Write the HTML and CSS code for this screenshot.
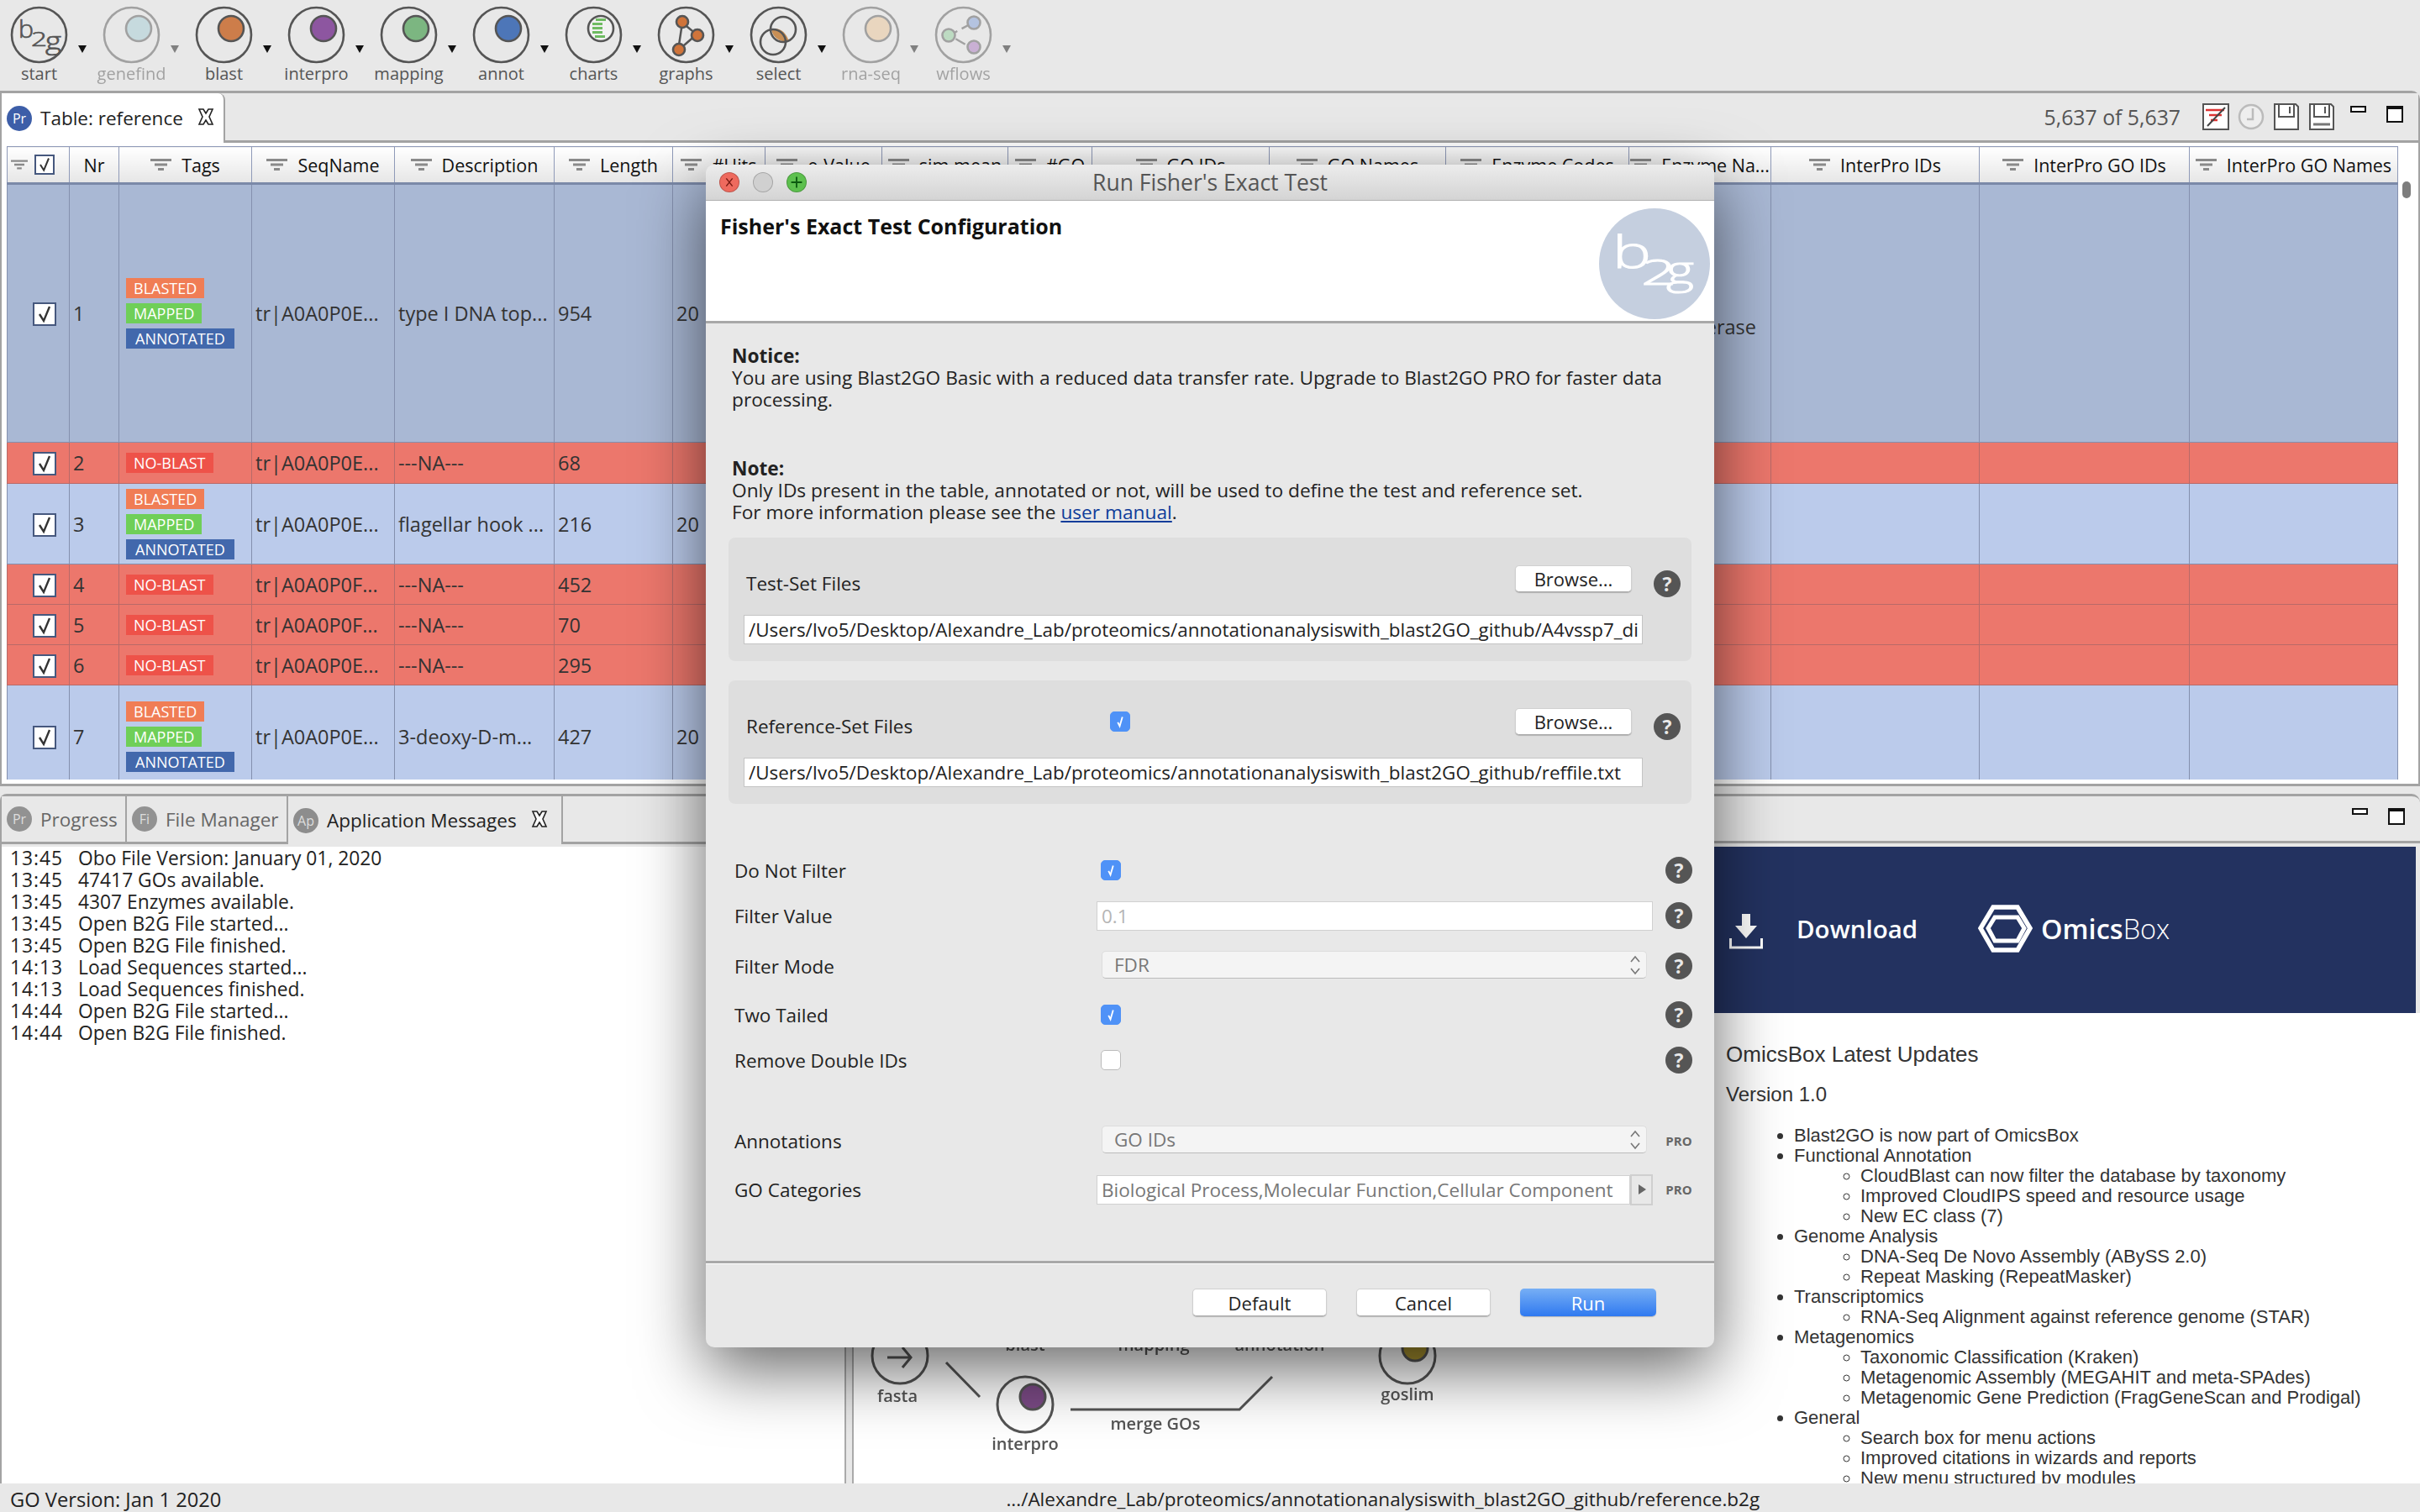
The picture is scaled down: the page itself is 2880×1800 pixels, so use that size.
FILE: index.html
```html
<!DOCTYPE html>
<html lang="en">
<head>
    <meta charset="UTF-8">
    <title>Blast2GO - Run Fisher's Exact Test</title>
    <link rel="stylesheet" href="styles.css">
</head>
<body>
    <!-- shared icons -->
    <svg class="defs" width="0" height="0">
        <symbol id="filter" viewBox="0 0 25 14"><path d="M0 0h25v3H0zM5 5.5h15v3H5zM9 11h7v3H9z" fill="#8a8a8a"/></symbol>
        <symbol id="check" viewBox="0 0 24 24"><path d="M6 12l5 8 7-17" fill="none" stroke="#333" stroke-width="2.4"/></symbol>
        <symbol id="tick" viewBox="0 0 24 24"><path d="M9 13l2.5 5L15 6" fill="none" stroke="#fff" stroke-width="2"/></symbol>
        <symbol id="close" viewBox="0 0 20 20"><path d="M2 1h5l3 5 3-5h5l-4 9 4 9h-5l-3-5-3 5H2l4-9z" fill="#fff" stroke="#222" stroke-width="1.6"/></symbol>
        <symbol id="updown" viewBox="0 0 12 24"><path d="M1 8l5-6 5 6M1 16l5 6 5-6" fill="none" stroke="#777" stroke-width="1.6"/></symbol>
    </svg>

    <!-- barra de herramientas -->
    <header class="toolbar">
        <div class="tool">
            <div class="tool-btn">
                <svg class="tool-icon" viewBox="0 0 69 69">
                    <circle class="ring" cx="34.5" cy="34.5" r="32.5"/>
                    <text class="logo-b" x="10" y="38" textLength="18" lengthAdjust="spacingAndGlyphs">b</text>
                    <text class="logo-2" x="25" y="48" textLength="19" lengthAdjust="spacingAndGlyphs">2</text>
                    <text class="logo-g" x="42" y="52" textLength="19" lengthAdjust="spacingAndGlyphs">g</text>
                </svg>
                <span>start</span>
            </div>
            <i class="arrow"></i>
        </div>
        <div class="tool off">
            <div class="tool-btn">
                <svg class="tool-icon" viewBox="0 0 69 69"><circle class="ring" cx="34.5" cy="34.5" r="32.5"/><circle class="disc" cx="43" cy="27" r="15" fill="#a3cbd4"/></svg>
                <span>genefind</span>
            </div>
            <i class="arrow"></i>
        </div>
        <div class="tool">
            <div class="tool-btn">
                <svg class="tool-icon" viewBox="0 0 69 69"><circle class="ring" cx="34.5" cy="34.5" r="32.5"/><circle class="disc" cx="43" cy="27" r="15" fill="#cd7d4a"/></svg>
                <span>blast</span>
            </div>
            <i class="arrow"></i>
        </div>
        <div class="tool">
            <div class="tool-btn">
                <svg class="tool-icon" viewBox="0 0 69 69"><circle class="ring" cx="34.5" cy="34.5" r="32.5"/><circle class="disc" cx="43" cy="27" r="15" fill="#8d56a0"/></svg>
                <span>interpro</span>
            </div>
            <i class="arrow"></i>
        </div>
        <div class="tool">
            <div class="tool-btn">
                <svg class="tool-icon" viewBox="0 0 69 69"><circle class="ring" cx="34.5" cy="34.5" r="32.5"/><circle class="disc" cx="43" cy="27" r="15" fill="#7cb681"/></svg>
                <span>mapping</span>
            </div>
            <i class="arrow"></i>
        </div>
        <div class="tool">
            <div class="tool-btn">
                <svg class="tool-icon" viewBox="0 0 69 69"><circle class="ring" cx="34.5" cy="34.5" r="32.5"/><circle class="disc" cx="43" cy="27" r="15" fill="#4d76b8"/></svg>
                <span>annot</span>
            </div>
            <i class="arrow"></i>
        </div>
        <div class="tool">
            <div class="tool-btn">
                <svg class="tool-icon" viewBox="0 0 69 69">
                    <circle class="ring" cx="34.5" cy="34.5" r="32.5"/>
                    <circle class="disc" cx="43" cy="27" r="15" fill="#f2f2f2"/>
                    <path d="M37 15h12v3H37zM33 20h12v3H33zM33 25h12v3H33zM33 30h12v3H33zM36 35h12v3H36z" fill="#6fbb62"/>
                </svg>
                <span>charts</span>
            </div>
            <i class="arrow"></i>
        </div>
        <div class="tool">
            <div class="tool-btn">
                <svg class="tool-icon" viewBox="0 0 69 69">
                    <circle class="ring" cx="34.5" cy="34.5" r="32.5"/>
                    <path d="M30 20l17 14-22 19z" fill="none" stroke="#555" stroke-width="2.5"/>
                    <circle class="node" cx="30" cy="19" r="7"/>
                    <circle class="node" cx="48" cy="35" r="7"/>
                    <circle class="node" cx="26" cy="52" r="7"/>
                </svg>
                <span>graphs</span>
            </div>
            <i class="arrow"></i>
        </div>
        <div class="tool">
            <div class="tool-btn">
                <svg class="tool-icon" viewBox="0 0 69 69">
                    <circle class="ring" cx="34.5" cy="34.5" r="32.5"/>
                    <path d="M26 28c9-3 17 2 21 14-9 2-19-3-21-14z" fill="#c98f55"/>
                    <circle class="thin" cx="40" cy="28" r="15"/>
                    <circle class="thin" cx="28" cy="43" r="15"/>
                </svg>
                <span>select</span>
            </div>
            <i class="arrow"></i>
        </div>
        <div class="tool off">
            <div class="tool-btn">
                <svg class="tool-icon" viewBox="0 0 69 69"><circle class="ring" cx="34.5" cy="34.5" r="32.5"/><circle class="disc" cx="43" cy="27" r="15" fill="#ecc494"/></svg>
                <span>rna-seq</span>
            </div>
            <i class="arrow"></i>
        </div>
        <div class="tool off">
            <div class="tool-btn">
                <svg class="tool-icon" viewBox="0 0 69 69">
                    <circle class="ring" cx="34.5" cy="34.5" r="32.5"/>
                    <path d="M44 21L18 35l26 15" fill="none" stroke="#555" stroke-width="2.5" stroke-dasharray="13 6"/>
                    <circle class="node blue" cx="47" cy="20" r="7.5"/>
                    <circle class="node green" cx="17" cy="35" r="7.5"/>
                    <circle class="node violet" cx="47" cy="49" r="7.5"/>
                </svg>
                <span>wflows</span>
            </div>
            <i class="arrow"></i>
        </div>
    </header>

    <!-- tabla principal -->
    <section class="table-pane">
        <div class="pane-bar">
            <div class="tab active">
                <span class="tab-icon blue">Pr</span>
                <span class="tab-text">Table: reference</span>
                <svg class="tab-close"><use href="#close"/></svg>
            </div>
            <div class="pane-tools">
                <span class="count">5,637 of 5,637</span>
                <svg class="mini" viewBox="0 0 32 32">
                    <rect x="1" y="1" width="30" height="30" fill="#fff" stroke="#555" stroke-width="2"/>
                    <path d="M4 8h22M8 14h15M10 20h8" stroke="#d33" stroke-width="2.4"/>
                    <path d="M6 27L27 5" stroke="#444" stroke-width="2"/>
                </svg>
                <svg class="mini" viewBox="0 0 32 32">
                    <circle cx="16" cy="16" r="14" fill="#eee" stroke="#bbb" stroke-width="2.5"/>
                    <path d="M18 6v13h-7" fill="none" stroke="#bbb" stroke-width="2.5"/>
                </svg>
                <svg class="mini" viewBox="0 0 30 32">
                    <path d="M1 1h25l3 3v27H1z" fill="#fff" stroke="#555" stroke-width="2"/>
                    <path d="M6 1v15h18V1M19 4v8" fill="none" stroke="#555" stroke-width="2"/>
                </svg>
                <svg class="mini" viewBox="0 0 30 32">
                    <path d="M1 1h25l3 3v27H1z" fill="#fff" stroke="#555" stroke-width="2"/>
                    <path d="M6 1v15h18V1M19 4v8" fill="none" stroke="#555" stroke-width="2"/>
                    <path d="M5 25h20" stroke="#777" stroke-width="3"/>
                </svg>
                <span class="win-min"></span>
                <span class="win-max"></span>
            </div>
        </div>
        <div class="table-wrap">
            <div class="table-clip">
                <table class="seqs">
                    <colgroup>
                        <col class="c-check"><col class="c-nr"><col class="c-tags"><col class="c-seq"><col class="c-desc">
                        <col class="c-len"><col class="c-hits"><col class="c-eval"><col class="c-sim"><col class="c-go">
                        <col class="c-goid"><col class="c-gonm"><col class="c-enz"><col class="c-enzn"><col class="c-ip">
                        <col class="c-ipgo"><col class="c-ipnm">
                    </colgroup>
                    <thead>
                        <tr>
                            <th><div class="th-in th-first"><svg class="filter"><use href="#filter"/></svg><span class="cb head"><svg><use href="#check"/></svg></span></div></th>
                            <th><div class="th-in">Nr</div></th>
                            <th><div class="th-in"><svg class="filter"><use href="#filter"/></svg>Tags</div></th>
                            <th><div class="th-in"><svg class="filter"><use href="#filter"/></svg>SeqName</div></th>
                            <th><div class="th-in"><svg class="filter"><use href="#filter"/></svg>Description</div></th>
                            <th><div class="th-in"><svg class="filter"><use href="#filter"/></svg>Length</div></th>
                            <th><div class="th-in"><svg class="filter"><use href="#filter"/></svg>#Hits</div></th>
                            <th><div class="th-in"><svg class="filter"><use href="#filter"/></svg>e-Value</div></th>
                            <th><div class="th-in"><svg class="filter"><use href="#filter"/></svg>sim mean</div></th>
                            <th><div class="th-in"><svg class="filter"><use href="#filter"/></svg>#GO</div></th>
                            <th><div class="th-in"><svg class="filter"><use href="#filter"/></svg>GO IDs</div></th>
                            <th><div class="th-in"><svg class="filter"><use href="#filter"/></svg>GO Names</div></th>
                            <th><div class="th-in"><svg class="filter"><use href="#filter"/></svg>Enzyme Codes</div></th>
                            <th><div class="th-in"><svg class="filter"><use href="#filter"/></svg>Enzyme Na...</div></th>
                            <th><div class="th-in"><svg class="filter"><use href="#filter"/></svg>InterPro IDs</div></th>
                            <th><div class="th-in"><svg class="filter"><use href="#filter"/></svg>InterPro GO IDs</div></th>
                            <th><div class="th-in"><svg class="filter"><use href="#filter"/></svg>InterPro GO Names</div></th>
                        </tr>
                    </thead>
                    <tbody>
                        <tr class="row-sel r-1">
                            <td class="chk"><span class="cb"><svg><use href="#check"/></svg></span></td><td>1</td>
                            <td><div class="tags"><span class="tag blasted">BLASTED</span><span class="tag mapped">MAPPED</span><span class="tag annotated">ANNOTATED</span></div></td>
                            <td>tr|A0A0P0E...</td><td>type I DNA top...</td><td>954</td><td>20</td>
                            <td></td><td></td><td></td><td></td><td></td><td></td><td class="enz"><div class="enz-in">DNA topoisomerase</div></td><td></td><td></td><td></td>
                        </tr>
                        <tr class="row-red r-2a">
                            <td class="chk"><span class="cb"><svg><use href="#check"/></svg></span></td><td>2</td>
                            <td><div class="tags"><span class="tag noblast">NO-BLAST</span></div></td>
                            <td>tr|A0A0P0E...</td><td>---NA---</td><td>68</td>
                            <td></td><td></td><td></td><td></td><td></td><td></td><td></td><td></td><td></td><td></td><td></td>
                        </tr>
                        <tr class="row-blue r-3">
                            <td class="chk"><span class="cb"><svg><use href="#check"/></svg></span></td><td>3</td>
                            <td><div class="tags"><span class="tag blasted">BLASTED</span><span class="tag mapped">MAPPED</span><span class="tag annotated">ANNOTATED</span></div></td>
                            <td>tr|A0A0P0E...</td><td>flagellar hook ...</td><td>216</td><td>20</td>
                            <td></td><td></td><td></td><td></td><td></td><td></td><td></td><td></td><td></td><td></td>
                        </tr>
                        <tr class="row-red r-2">
                            <td class="chk"><span class="cb"><svg><use href="#check"/></svg></span></td><td>4</td>
                            <td><div class="tags"><span class="tag noblast">NO-BLAST</span></div></td>
                            <td>tr|A0A0P0F...</td><td>---NA---</td><td>452</td>
                            <td></td><td></td><td></td><td></td><td></td><td></td><td></td><td></td><td></td><td></td><td></td>
                        </tr>
                        <tr class="row-red r-2">
                            <td class="chk"><span class="cb"><svg><use href="#check"/></svg></span></td><td>5</td>
                            <td><div class="tags"><span class="tag noblast">NO-BLAST</span></div></td>
                            <td>tr|A0A0P0F...</td><td>---NA---</td><td>70</td>
                            <td></td><td></td><td></td><td></td><td></td><td></td><td></td><td></td><td></td><td></td><td></td>
                        </tr>
                        <tr class="row-red r-2">
                            <td class="chk"><span class="cb"><svg><use href="#check"/></svg></span></td><td>6</td>
                            <td><div class="tags"><span class="tag noblast">NO-BLAST</span></div></td>
                            <td>tr|A0A0P0E...</td><td>---NA---</td><td>295</td>
                            <td></td><td></td><td></td><td></td><td></td><td></td><td></td><td></td><td></td><td></td><td></td>
                        </tr>
                        <tr class="row-blue r-7">
                            <td class="chk"><span class="cb"><svg><use href="#check"/></svg></span></td><td>7</td>
                            <td><div class="tags"><span class="tag blasted">BLASTED</span><span class="tag mapped">MAPPED</span><span class="tag annotated">ANNOTATED</span></div></td>
                            <td>tr|A0A0P0E...</td><td>3-deoxy-D-m...</td><td>427</td><td>20</td>
                            <td></td><td></td><td></td><td></td><td></td><td></td><td></td><td></td><td></td><td></td>
                        </tr>
                    </tbody>
                </table>
            </div>
            <div class="scroll-thumb"></div>
        </div>
    </section>

    <!-- paneles inferiores -->
    <section class="bottom">
        <div class="log-pane">
            <div class="pane-bar low">
                <div class="tab off"><span class="tab-icon">Pr</span><span class="tab-text">Progress</span></div>
                <div class="tab off"><span class="tab-icon">Fi</span><span class="tab-text">File Manager</span></div>
                <div class="tab current"><span class="tab-icon">Ap</span><span class="tab-text">Application Messages</span><svg class="tab-close"><use href="#close"/></svg></div>
            </div>
            <div class="log">
                <div><b>13:45</b>Obo File Version: January 01, 2020</div>
                <div><b>13:45</b>47417 GOs available.</div>
                <div><b>13:45</b>4307 Enzymes available.</div>
                <div><b>13:45</b>Open B2G File started...</div>
                <div><b>13:45</b>Open B2G File finished.</div>
                <div><b>14:13</b>Load Sequences started...</div>
                <div><b>14:13</b>Load Sequences finished.</div>
                <div><b>14:44</b>Open B2G File started...</div>
                <div><b>14:44</b>Open B2G File finished.</div>
            </div>
        </div>
        <div class="sash"></div>
        <div class="welcome">
            <div class="pane-bar welcome-bar">
                <div class="pane-tools"><span class="win-min"></span><span class="win-max"></span></div>
            </div>
            <div class="banner">
                <svg class="dl-icon" viewBox="0 0 40 42">
                    <path d="M15 0h10v14h8L20 29 7 14h8z" fill="#fff"/>
                    <path d="M1.5 29v11h37V29" fill="none" stroke="#fff" stroke-width="3"/>
                </svg>
                <span class="dl-text">Download</span>
                <svg class="box-logo" viewBox="0 0 65 57">
                    <path d="M18 3h29l15 25-15 26H18L3 28z" fill="none" stroke="#fff" stroke-width="5.5"/>
                    <path d="M20 15h27l8 13-8 15H20l-8-15z" fill="#233260" stroke="#fff" stroke-width="5"/>
                </svg>
                <span class="box-text"><b>Omics</b>Box</span>
            </div>
            <div class="welcome-body">
                <div class="flow">
                    <svg class="flow-svg" viewBox="1016 1560 1024 206">
                        <g fill="none" stroke="#555" stroke-width="3">
                            <circle cx="1071" cy="1614" r="33"/>
                            <path d="M1056 1616h28M1074 1604l10 12-10 12"/>
                            <circle cx="1220" cy="1672" r="33"/>
                            <circle cx="1229" cy="1663" r="15" fill="#7b4a85"/>
                            <circle cx="1675" cy="1614" r="33"/>
                            <circle cx="1684" cy="1605" r="15" fill="#a8922f"/>
                            <path d="M1126 1622l40 41M1274 1678h201l39-39"/>
                        </g>
                        <g class="flow-text">
                            <text x="1220" y="1608">blast</text>
                            <text x="1373" y="1608">mapping</text>
                            <text x="1523" y="1608">annotation</text>
                            <text x="1068" y="1669">fasta</text>
                            <text x="1675" y="1667">goslim</text>
                            <text x="1375" y="1702">merge GOs</text>
                            <text x="1220" y="1726">interpro</text>
                        </g>
                    </svg>
                </div>
                <div class="news">
                    <p class="news-title">OmicsBox Latest Updates</p>
                    <p class="news-version">Version 1.0</p>
                    <ul>
                        <li>Blast2GO is now part of OmicsBox</li>
                        <li>Functional Annotation
                            <ul>
                                <li>CloudBlast can now filter the database by taxonomy</li>
                                <li>Improved CloudIPS speed and resource usage</li>
                                <li>New EC class (7)</li>
                            </ul>
                        </li>
                        <li>Genome Analysis
                            <ul>
                                <li>DNA-Seq De Novo Assembly (ABySS 2.0)</li>
                                <li>Repeat Masking (RepeatMasker)</li>
                            </ul>
                        </li>
                        <li>Transcriptomics
                            <ul>
                                <li>RNA-Seq Alignment against reference genome (STAR)</li>
                            </ul>
                        </li>
                        <li>Metagenomics
                            <ul>
                                <li>Taxonomic Classification (Kraken)</li>
                                <li>Metagenomic Assembly (MEGAHIT and meta-SPAdes)</li>
                                <li>Metagenomic Gene Prediction (FragGeneScan and Prodigal)</li>
                            </ul>
                        </li>
                        <li>General
                            <ul>
                                <li>Search box for menu actions</li>
                                <li>Improved citations in wizards and reports</li>
                                <li>New menu structured by modules</li>
                            </ul>
                        </li>
                    </ul>
                </div>
            </div>
        </div>
    </section>

    <footer class="status">
        <span>GO Version: Jan 1 2020</span>
        <span class="status-path">.../Alexandre_Lab/proteomics/annotationanalysiswith_blast2GO_github/reference.b2g</span>
    </footer>

    <!-- dialogo -->
    <div class="dialog">
        <div class="title-bar">
            <span class="light red"><svg viewBox="0 0 24 24"><path d="M8 7l8 10M16 7L8 17" stroke="#7a1a12" stroke-width="1.6"/></svg></span>
            <span class="light grey"></span>
            <span class="light green"><svg viewBox="0 0 24 24"><path d="M12 5v14M5 12h14" stroke="#0c5a10" stroke-width="2"/></svg></span>
            <span class="title-text">Run Fisher's Exact Test</span>
        </div>
        <div class="dialog-head">
            <h2>Fisher's Exact Test Configuration</h2>
            <svg class="head-logo" viewBox="0 0 132 132">
                <circle cx="66" cy="66" r="66" fill="#c5cfdf"/>
                <text class="big-b" x="16" y="71" textLength="46" lengthAdjust="spacingAndGlyphs">b</text>
                <text class="big-2" x="50" y="91" textLength="42" lengthAdjust="spacingAndGlyphs">2</text>
                <text class="big-g" x="80" y="90" textLength="33" lengthAdjust="spacingAndGlyphs">g</text>
            </svg>
        </div>
        <div class="dialog-body">
            <div class="notes">
                <p><b>Notice:</b><br>You are using Blast2GO Basic with a reduced data transfer rate. Upgrade to Blast2GO PRO for faster data<br>processing.</p>
                <p class="note-2"><b>Note:</b><br>Only IDs present in the table, annotated or not, will be used to define the test and reference set.<br>For more information please see the <a href="#">user manual</a>.</p>
            </div>
            <div class="file-group">
                <div class="file-row">
                    <label class="file-label">Test-Set Files</label>
                    <button class="btn browse">Browse...</button>
                    <span class="help">?</span>
                </div>
                <div class="path-input">/Users/Ivo5/Desktop/Alexandre_Lab/proteomics/annotationanalysiswith_blast2GO_github/A4vssp7_di</div>
            </div>
            <div class="file-group second">
                <div class="file-row">
                    <label class="file-label">Reference-Set Files</label>
                    <span class="tick on"><svg><use href="#tick"/></svg></span>
                    <button class="btn browse">Browse...</button>
                    <span class="help">?</span>
                </div>
                <div class="path-input">/Users/Ivo5/Desktop/Alexandre_Lab/proteomics/annotationanalysiswith_blast2GO_github/reffile.txt</div>
            </div>
            <div class="form-grid">
                <label>Do Not Filter</label>
                <span class="tick on"><svg><use href="#tick"/></svg></span>
                <span class="help">?</span>

                <label>Filter Value</label>
                <div class="field dim">0.1</div>
                <span class="help">?</span>

                <label>Filter Mode</label>
                <div class="select">FDR<svg><use href="#updown"/></svg></div>
                <span class="help">?</span>

                <label>Two Tailed</label>
                <span class="tick on"><svg><use href="#tick"/></svg></span>
                <span class="help">?</span>

                <label>Remove Double IDs</label>
                <span class="tick"></span>
                <span class="help">?</span>

                <div class="spacer"></div>

                <label>Annotations</label>
                <div class="select">GO IDs<svg><use href="#updown"/></svg></div>
                <span class="pro">PRO</span>

                <label>GO Categories</label>
                <div class="field-wrap">
                    <div class="field grey-text">Biological Process,Molecular Function,Cellular Component</div>
                    <span class="more"></span>
                </div>
                <span class="pro">PRO</span>
            </div>
        </div>
        <div class="dialog-foot">
            <button class="btn wide">Default</button>
            <button class="btn wide">Cancel</button>
            <button class="btn wide primary">Run</button>
        </div>
    </div>
</body>
</html>
```

FILE: styles.css
```css
/* General */
html, body {
    margin: 0;
    padding: 0;
    height: 100%;
}

body {
    width: 2880px;
    height: 1800px;
    overflow: hidden;
    display: flex;
    flex-direction: column;
    position: relative;
    background-color: #e8e8e8;
    color: #222;
    font-family: "Open Sans", "Noto Sans", sans-serif;
    font-size: 22.5px;
}

.defs {
    position: absolute;
}

/* Toolbar */
.toolbar {
    height: 108px;
    flex: none;
    display: flex;
    padding-top: 7px;
    box-sizing: border-box;
}

.tool {
    width: 110px;
    display: flex;
    color: #555;
}

.tool.off {
    opacity: 0.48;
}

.tool-btn {
    width: 93px;
    flex: none;
    display: flex;
    flex-direction: column;
    align-items: center;
    font-size: 20px;
    line-height: 24px;
}

.tool-icon {
    width: 69px;
    height: 69px;
}

.ring, .thin {
    fill: none;
    stroke: #555;
    stroke-width: 2.6;
}

.disc {
    stroke: #555;
    stroke-width: 2.6;
}

.node {
    fill: #d0743a;
    stroke: #555;
    stroke-width: 2.6;
}

.node.blue { fill: #7d9bd8; }
.node.green { fill: #8fcf99; }
.node.violet { fill: #a874c0; }

.logo-b, .logo-2, .logo-g {
    font-family: "Open Sans", sans-serif;
    font-weight: 300;
    fill: #555;
    stroke: #555;
    stroke-width: 0.7;
}

.logo-b { font-size: 29px; }
.logo-2 { font-size: 24px; }
.logo-g { font-size: 30px; }

.arrow {
    width: 0;
    height: 0;
    margin: 47px 0 0 0;
    border-left: 5px solid transparent;
    border-right: 5px solid transparent;
    border-top: 9px solid #111;
}

/* Barras de panel */
.table-pane {
    height: 828px;
    flex: none;
    display: flex;
    flex-direction: column;
    box-sizing: border-box;
    border: 3px solid #a3a3a3;
    border-width: 3px 2px 3px 2px;
    border-top-right-radius: 10px;
}

.pane-bar {
    height: 56px;
    flex: none;
    display: flex;
    box-sizing: content-box;
    border-bottom: 3px solid #a3a3a3;
    background-color: #e8e8e8;
}

.tab {
    display: flex;
    align-items: center;
    height: 100%;
    box-sizing: border-box;
    padding: 0 10px 0 6px;
}

.tab.active {
    width: 266px;
    height: 59px;
    background-color: #fff;
    border-right: 2px solid #a3a3a3;
    border-top-right-radius: 8px;
}

.tab-icon {
    width: 30px;
    height: 30px;
    border-radius: 50%;
    background-color: #8d8d8d;
    color: #ddd;
    font-size: 16px;
    line-height: 30px;
    text-align: center;
    margin-right: 10px;
    flex: none;
}

.tab-icon.blue {
    background-color: #3d5ea8;
    color: #fff;
}

.tab-text {
    white-space: nowrap;
}

.tab-close {
    width: 20px;
    height: 20px;
    margin: -4px 0 0 17px;
    flex: none;
}

.pane-tools {
    margin-left: auto;
    display: flex;
    align-items: center;
    height: 56px;
}

.count {
    color: #555;
    font-size: 24.8px;
    margin-right: 26px;
}

.mini {
    width: 32px;
    height: 32px;
    margin-right: 10px;
}

.win-min {
    width: 15px;
    height: 4px;
    border: 2px solid #111;
    background-color: #fff;
    margin: -18px 24px 0 8px;
}

.win-max {
    width: 16px;
    height: 14px;
    border: 2px solid #111;
    border-top-width: 4px;
    background-color: #fff;
    margin: -6px 18px 0 0;
}

/* Tabla */
.table-wrap {
    flex: 1;
    position: relative;
    overflow: hidden;
    background-color: #fff;
    padding: 4px 0 0 6px;
}

.table-clip {
    height: 754px;
    overflow: hidden;
}

.seqs {
    table-layout: fixed;
    width: 2845px;
    border-collapse: collapse;
}

.c-check { width: 74px; }
.c-nr { width: 59px; }
.c-tags { width: 158px; }
.c-seq { width: 170px; }
.c-desc { width: 190px; }
.c-len { width: 141px; }
.c-hits { width: 110px; }
.c-eval { width: 139px; }
.c-sim { width: 150px; }
.c-go { width: 100px; }
.c-goid { width: 211px; }
.c-gonm { width: 210px; }
.c-enz { width: 218px; }
.c-enzn { width: 169px; }
.c-ip { width: 248px; }
.c-ipgo { width: 250px; }
.c-ipnm { width: 248px; }

.seqs th {
    height: 42px;
    padding: 0;
    font-size: 21.5px;
    font-weight: normal;
    color: #111;
    background: linear-gradient(#ffffff, #e6e6e6);
    border: 1px solid #8f9ab8;
    border-width: 1px 1px 3px 1px;
    border-bottom-color: #7b89a8;
}

.th-in {
    display: flex;
    align-items: center;
    justify-content: center;
    white-space: nowrap;
    overflow: hidden;
}

.th-first {
    justify-content: flex-start;
    padding-left: 4px;
}

.filter {
    width: 25px;
    height: 14px;
    margin-right: 12px;
    flex: none;
}

.seqs td {
    padding: 0 4px;
    font-size: 23.5px;
    color: #333;
    border: 1px solid #8490ae;
    white-space: nowrap;
    overflow: hidden;
}

.row-sel td { background-color: #a9b8d4; }
.row-red td { background-color: #ec776c; border-color: #b86a68; }
.row-blue td { background-color: #bbcbeb; }

.r-1 { height: 308px; }
.r-2a { height: 49px; }
.r-2 { height: 48px; }
.r-3 { height: 96px; }
.r-7 { height: 122px; }

.seqs td.chk {
    text-align: right;
    padding-right: 15px;
}

.cb {
    display: inline-block;
    vertical-align: middle;
    width: 24px;
    height: 24px;
    margin-top: -3px;
    border: 2px solid #46587e;
    background-color: #fff;
}

.cb svg {
    display: block;
    width: 24px;
    height: 24px;
}

.cb.head {
    width: 20px;
    height: 20px;
    margin-top: 0;
}

.cb.head svg {
    width: 20px;
    height: 20px;
}

.th-first .filter {
    width: 20px;
    margin-right: 8px;
}

.tags {
    display: flex;
    flex-direction: column;
    align-items: flex-start;
    gap: 6px;
    padding-left: 4px;
}

.tag {
    height: 24px;
    line-height: 24px;
    padding: 0 9px;
    font-size: 18px;
    color: #fff;
}

.blasted { background-color: #f07d55; }
.mapped { background-color: #6fcf58; }
.annotated { background-color: #4268ac; padding: 0 11px; }
.noblast { background-color: #ee5249; }

.seqs td.enz {
    padding: 32px 17px 0 0;
}

.enz-in {
    display: flex;
    justify-content: flex-end;
}

.scroll-thumb {
    position: absolute;
    top: 46px;
    right: 9px;
    width: 10px;
    height: 20px;
    border-radius: 5px;
    background-color: #7d7d7d;
}

/* Paneles inferiores */
.bottom {
    height: 821px;
    flex: none;
    margin-top: 9px;
    display: flex;
    overflow: hidden;
}

.log-pane {
    width: 1005px;
    flex: none;
    display: flex;
    flex-direction: column;
    box-sizing: border-box;
    border-left: 2px solid #a3a3a3;
    border-top: 3px solid #a3a3a3;
    border-top-left-radius: 8px;
}

.pane-bar.low {
    height: 54px;
}

.tab.off {
    color: #666;
    border-right: 2px solid #a3a3a3;
}

.tab.off:nth-child(1) {
    width: 149px;
}

.tab.off:nth-child(2) {
    width: 192px;
}

.tab.off .tab-icon {
    background-color: #929292;
}

.tab.current {
    width: 327px;
    height: 57px;
    background-color: #e8e8e8;
    border-right: 2px solid #a3a3a3;
}

.log {
    flex: 1;
    margin-top: 3px;
    background-color: #fff;
    padding: 1px 0 0 10px;
    font-size: 22.8px;
    line-height: 26px;
}

.log b {
    display: inline-block;
    width: 81px;
    font-weight: normal;
    letter-spacing: 1px;
}

.sash {
    width: 7px;
    flex: none;
    border-left: 2px solid #aaa;
    border-right: 2px solid #aaa;
}

.welcome {
    flex: 1;
    display: flex;
    flex-direction: column;
    min-width: 0;
}

.welcome-bar {
    height: 53px;
    border-top: 3px solid #a3a3a3;
    border-top-right-radius: 10px;
}

.welcome-bar .pane-tools {
    height: 53px;
}

.banner {
    height: 198px;
    flex: none;
    box-sizing: border-box;
    margin: 4px 5px 0 0;
    padding-bottom: 3px;
    background-color: #233260;
    display: flex;
    align-items: center;
    color: #fff;
}

.dl-icon {
    width: 40px;
    height: 42px;
    margin: 7px 40px 0 1042px;
}

.dl-text {
    font-size: 29.5px;
    font-weight: 600;
    width: 216px;
}

.box-logo {
    width: 65px;
    height: 57px;
    margin-right: 10px;
}

.box-text {
    font-size: 32.5px;
    font-weight: 300;
}

.box-text b {
    font-weight: 600;
}

.welcome-body {
    flex: 1;
    display: flex;
    background-color: #fff;
    min-height: 0;
    overflow: hidden;
}

.flow {
    width: 1024px;
    flex: none;
    display: flex;
    align-items: flex-end;
}

.flow-svg {
    width: 1024px;
    height: 206px;
    filter: blur(0.6px);
}

.flow-text text {
    font-family: "Open Sans", sans-serif;
    font-size: 20px;
    font-weight: 600;
    fill: #555;
    text-anchor: middle;
}

/* Noticias */
.news {
    padding-left: 14px;
    font-family: "Liberation Sans", Arial, sans-serif;
    font-size: 22px;
    line-height: 24px;
    color: #333;
}

.news p {
    margin: 0;
}

.news-title {
    font-size: 26px;
    padding-top: 37px;
}

.news-version {
    font-size: 24px;
    padding-top: 24px;
}

.news ul {
    margin: 0;
    padding-left: 81px;
}

.news > ul {
    margin-top: 25px;
}

.news ul ul {
    padding-left: 79px;
}

/* Barra de estado */
.status {
    height: 34px;
    flex: none;
    display: flex;
    align-items: center;
    padding: 3px 0 0 12px;
    box-sizing: border-box;
    font-size: 23.7px;
    color: #222;
}

.status-path {
    margin-left: 934px;
    font-size: 22.5px;
}

/* Dialogo */
.dialog {
    position: absolute;
    left: 840px;
    top: 196px;
    width: 1200px;
    height: 1408px;
    display: flex;
    flex-direction: column;
    background-color: #e8e8e8;
    border-radius: 10px;
    box-shadow: 0 26px 80px rgba(0, 0, 0, 0.6);
    overflow: hidden;
}

.title-bar {
    height: 43px;
    flex: none;
    position: relative;
    display: flex;
    align-items: center;
    gap: 16px;
    padding-left: 16px;
    background: linear-gradient(#ececec, #d4d4d4);
    border-bottom: 1px solid #b0b0b0;
    box-sizing: border-box;
}

.light {
    width: 24px;
    height: 24px;
    border-radius: 50%;
    box-sizing: border-box;
    border: 1px solid rgba(0, 0, 0, 0.2);
}

.light svg {
    display: block;
    width: 100%;
    height: 100%;
}

.light.red { background-color: #ee6a5e; }
.light.grey { background-color: #d0d0d0; }
.light.green { background-color: #5dc04e; }

.title-text {
    position: absolute;
    left: 0;
    right: 0;
    text-align: center;
    font-size: 26.5px;
    color: #555;
}

.dialog-head {
    height: 146px;
    flex: none;
    display: flex;
    justify-content: space-between;
    background-color: #fff;
    padding: 0 5px 0 17px;
    box-sizing: border-box;
    border-bottom: 3px solid #a8a8a8;
}

.dialog-head h2 {
    margin: 13px 0 0;
    font-size: 25px;
    font-weight: 700;
    color: #111;
}

.head-logo {
    width: 132px;
    height: 132px;
    margin-top: 9px;
}

.big-b, .big-2, .big-g {
    font-family: "Open Sans", sans-serif;
    font-weight: 300;
    fill: #fff;
    stroke: #fff;
    stroke-width: 1;
}

.big-b { font-size: 54px; }
.big-2 { font-size: 43px; }
.big-g { font-size: 46px; }

.dialog-body {
    flex: 1;
    padding-top: 26px;
}

.notes {
    padding-left: 31px;
    font-size: 22.7px;
    line-height: 26px;
}

.notes p {
    margin: 0;
}

.notes .note-2 {
    margin-top: 56px;
}

.notes a {
    color: #0e3c9a;
}

.file-group {
    margin: 17px 0 0 27px;
    width: 1146px;
    height: 147px;
    box-sizing: border-box;
    padding: 33px 13px 0 18px;
    background-color: #dedede;
    border-radius: 8px;
}

.file-group.second {
    margin-top: 23px;
}

.file-row {
    height: 32px;
    display: flex;
    align-items: center;
}

.file-label {
    width: 436px;
    padding: 10px 0 0 3px;
    box-sizing: border-box;
}

.btn {
    font-family: inherit;
    font-size: 22px;
    color: #222;
    background-color: #fff;
    border: 1px solid #d0d0d0;
    border-bottom-color: #aaa;
    border-radius: 5px;
    box-shadow: 0 1px 1px rgba(0, 0, 0, 0.2);
    padding: 0;
}

.browse {
    width: 139px;
    height: 32px;
    margin-left: auto;
}

.help {
    width: 32px;
    height: 32px;
    flex: none;
    border-radius: 50%;
    background-color: #555;
    color: #e8e8e8;
    font-weight: 700;
    font-size: 23px;
    line-height: 32px;
    text-align: center;
}

.file-row .help {
    margin: 11px 0 0 26px;
}

.path-input {
    width: 1070px;
    height: 35px;
    margin-top: 27px;
    box-sizing: border-box;
    padding-left: 5px;
    font-size: 22.4px;
    line-height: 33px;
    background-color: #fff;
    border: 1px solid #c4c4c4;
    white-space: nowrap;
    overflow: hidden;
}

.tick {
    display: block;
    width: 24px;
    height: 24px;
    box-sizing: border-box;
    border-radius: 5px;
    background-color: #fff;
    border: 1px solid #bbb;
}

.tick.on {
    background-color: #4f92f7;
    border-color: #4f92f7;
}

.tick svg {
    display: block;
    width: 22px;
    height: 22px;
}

.form-grid {
    margin: 52px 0 0 34px;
    display: grid;
    grid-template-columns: 420px 662px 40px;
    grid-template-rows: 54px 54px 66px 50px 58px 39px 56px 60px;
    column-gap: 11px;
    align-items: center;
}

.form-grid .help {
    justify-self: center;
}

.form-grid .tick {
    margin-left: 5px;
}

.spacer {
    grid-column: 1 / 4;
}

.field {
    height: 35px;
    flex: 1;
    box-sizing: border-box;
    background-color: #fff;
    border: 1px solid #d0d0d0;
    padding-left: 5px;
    line-height: 33px;
    white-space: nowrap;
    overflow: hidden;
}

.field.dim {
    color: #b5b5b5;
}

.field.grey-text {
    color: #777;
}

.field-wrap {
    display: flex;
    margin-top: 2px;
}

.more {
    width: 27px;
    height: 37px;
    margin-top: -1px;
    flex: none;
    box-sizing: border-box;
    border: 2px solid #cfcfcf;
    position: relative;
}

.more::after {
    content: "";
    position: absolute;
    left: 8px;
    top: 10px;
    border-left: 9px solid #666;
    border-top: 6px solid transparent;
    border-bottom: 6px solid transparent;
}

.select {
    height: 33px;
    margin: -3px 7px 0 6px;
    display: flex;
    align-items: center;
    justify-content: space-between;
    box-sizing: border-box;
    padding: 0 7px 0 14px;
    color: #777;
    background-color: #f4f4f4;
    border: 1px solid #ddd;
    border-bottom-color: #bbb;
    border-radius: 5px;
}

.select svg {
    width: 12px;
    height: 24px;
}

.pro {
    justify-self: center;
    font-size: 15px;
    font-weight: 700;
    color: #666;
}

.dialog-foot {
    height: 103px;
    flex: none;
    box-sizing: border-box;
    display: flex;
    justify-content: flex-end;
    gap: 35px;
    padding: 30px 69px 0 0;
    border-top: 3px solid #a8a8a8;
    box-shadow: inset 0 1px 0 #fff;
}

.wide {
    width: 160px;
    height: 33px;
}

.primary {
    width: 162px;
    color: #fff;
    border: none;
    background: linear-gradient(#77aff5, #2f79f0);
}
```
